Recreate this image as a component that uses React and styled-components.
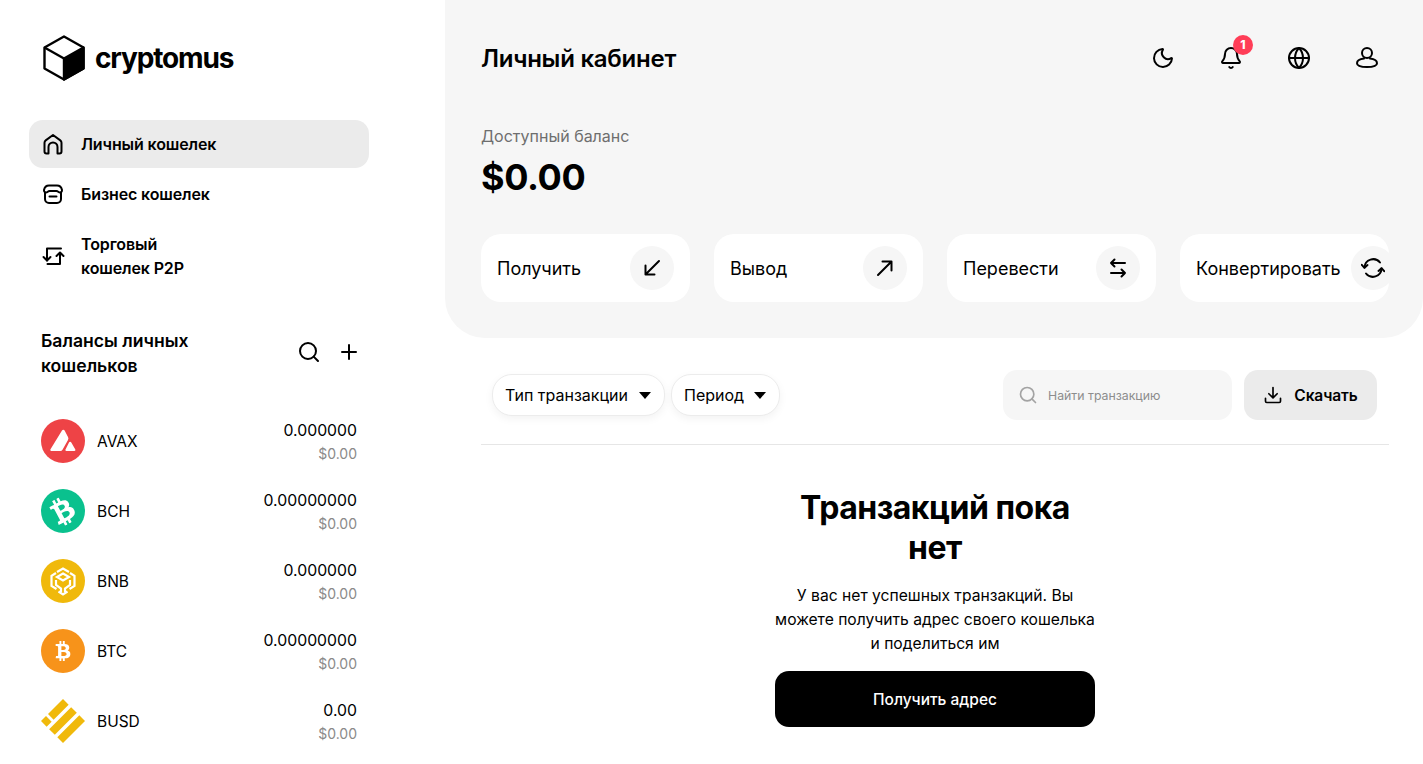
import styled, { createGlobalStyle } from "styled-components";
import { Bell, Globe, Moon, Plus, Search } from "lucide-react";
import { FaBtc } from "react-icons/fa";

const GlobalStyle = createGlobalStyle`
  html, body {
    margin: 0;
    padding: 0;
    height: 100%;
    overflow: hidden;
    background: #fff;
    color: #000;
    font-family: Inter, "Noto Sans", sans-serif;
  }
  * { box-sizing: border-box; }
`;

const Page = styled.div`
  display: grid;
  grid-template-columns: 445px 978px;
  height: 764px;
  overflow: hidden;
`;

/* sidebar */
const Sidebar = styled.aside`
  padding-left: 29px;
  width: 369px;
`;

const Logo = styled.div`
  display: flex;
  align-items: center;
  gap: 10px;
  height: 120px;
  padding: 0 0 4px 14px;
`;

const LogoText = styled.span`
  font-size: 28px;
  font-weight: 700;
  letter-spacing: -1.15px;
`;

const Nav = styled.nav`
  display: flex;
  flex-direction: column;
  gap: 2px;
`;

const NavItem = styled.a`
  display: flex;
  align-items: center;
  gap: 16px;
  padding: 12px;
  border-radius: 14px;
  background: ${({ $active }) => ($active ? "#ebebeb" : "transparent")};
  font-size: 16px;
  font-weight: 600;
  line-height: 24px;
  letter-spacing: -0.12px;
  svg { flex: none; }
`;

const BalanceHead = styled.div`
  display: flex;
  align-items: center;
  justify-content: space-between;
  margin-top: 36px;
  padding: 0 12px;
`;

const BalanceTitle = styled.h2`
  margin: 0;
  width: 190px;
  font-size: 17.6px;
  font-weight: 600;
  line-height: 25px;
`;

const BalanceTools = styled.div`
  display: flex;
  align-items: center;
  gap: 16px;
  margin: 0 -4px 2px 0;
`;

const CoinList = styled.div`
  margin-top: 28px;
  padding: 0 12px;
`;

const CoinRow = styled.div`
  display: flex;
  align-items: center;
  height: 70px;
  gap: 12px;
`;

const CoinBadge = styled.div`
  display: flex;
  align-items: center;
  justify-content: center;
  width: 44px;
  height: 44px;
  border-radius: 50%;
  flex: none;
  color: #fff;
  background: ${({ $bg }) => $bg};
`;

const CoinName = styled.span`
  flex: 1;
  font-size: 15.5px;
`;

const CoinAmounts = styled.div`
  padding-top: 3px;
  text-align: right;
  line-height: 24px;
`;

const CoinAmount = styled.div`
  font-size: 15.8px;
  margin-bottom: -1px;
`;

const CoinUsd = styled.div`
  font-size: 14px;
  color: #8a8a8a;
`;

/* main column */
const Main = styled.main`
  display: flex;
  flex-direction: column;
  min-width: 0;
`;

const Panel = styled.section`
  background: #f6f6f6;
  padding: 0 34px 36px 36px;
  border-radius: 0 0 40px 40px;
`;

const TopBar = styled.div`
  display: flex;
  align-items: center;
  justify-content: space-between;
  height: 116px;
`;

const Title = styled.h1`
  margin: 0;
  font-size: 24px;
  font-weight: 600;
  letter-spacing: -0.25px;
`;

const TopIcons = styled.div`
  display: flex;
  gap: 24px;
`;

const TopIcon = styled.div`
  position: relative;
  display: flex;
  align-items: center;
  justify-content: center;
  width: 44px;
  height: 44px;
`;

const Badge = styled.span`
  position: absolute;
  top: -1px;
  right: 0;
  width: 20px;
  height: 20px;
  border-radius: 50%;
  background: #ff3d57;
  color: #fff;
  font-size: 12px;
  font-weight: 800;
  line-height: 20px;
  text-align: center;
`;

const BalanceLabel = styled.div`
  margin-top: 8px;
  font-size: 16px;
  line-height: 24px;
  color: #6e6e6e;
`;

const BalanceValue = styled.div`
  margin-top: 6px;
  font-size: 36px;
  font-weight: 700;
  line-height: 46px;
  letter-spacing: -0.4px;
`;

const Actions = styled.div`
  display: flex;
  gap: 24px;
  margin-top: 34px;
  overflow: hidden;
`;

const ActionCard = styled.div`
  display: flex;
  align-items: center;
  justify-content: space-between;
  gap: 10px;
  flex: none;
  width: 209px;
  height: 68px;
  padding: 0 16px;
  border-radius: 20px;
  background: #fff;
  font-size: 18px;
  white-space: nowrap;
`;

const ActionIcon = styled.div`
  display: flex;
  align-items: center;
  justify-content: center;
  flex: none;
  width: 44px;
  height: 44px;
  border-radius: 50%;
  background: #f6f6f6;
`;

const Content = styled.div`
  padding: 32px 34px 0 36px;
`;

const Filters = styled.div`
  display: flex;
  align-items: center;
  justify-content: space-between;
  padding: 0 12px 24px 11px;
  border-bottom: 1px solid #e6e6e6;
`;

const FilterGroup = styled.div`
  display: flex;
  align-items: center;
  gap: ${({ $gap }) => $gap}px;
`;

const Pill = styled.div`
  display: flex;
  align-items: center;
  justify-content: space-between;
  width: ${({ $w }) => $w}px;
  height: 42px;
  padding: 0 13px 0 12px;
  border: 1px solid #ececec;
  border-radius: 20px;
  background: #fff;
  box-shadow: 0 3px 8px rgba(0, 0, 0, 0.05);
  font-size: 16px;
`;

const Caret = styled.span`
  width: 0;
  height: 0;
  border-left: 6.5px solid transparent;
  border-right: 6.5px solid transparent;
  border-top: 7px solid #000;
`;

const SearchBox = styled.div`
  display: flex;
  align-items: center;
  gap: 10px;
  width: 229px;
  height: 50px;
  padding-left: 15px;
  border-radius: 14px;
  background: #f6f6f6;
  color: #8d8d8d;
  font-size: 12.3px;
`;

const DownloadButton = styled.div`
  display: flex;
  align-items: center;
  justify-content: center;
  gap: 11px;
  width: 133px;
  height: 50px;
  border-radius: 14px;
  background: #ebebeb;
  font-size: 15.5px;
  font-weight: 600;
  letter-spacing: -0.1px;
`;

const Empty = styled.div`
  display: flex;
  flex-direction: column;
  align-items: center;
  width: 320px;
  margin: 43px auto 0;
  text-align: center;
`;

const EmptyTitle = styled.h2`
  margin: 0;
  font-size: 32px;
  font-weight: 700;
  line-height: 40px;
  letter-spacing: -0.5px;
`;

const EmptyText = styled.p`
  width: 330px;
  margin: 16px -5px 15px;
  font-size: 15.65px;
  line-height: 24px;
`;

const PrimaryButton = styled.div`
  display: flex;
  align-items: center;
  justify-content: center;
  width: 320px;
  height: 56px;
  border-radius: 14px;
  background: #000;
  color: #fff;
  font-size: 15.5px;
  font-weight: 500;
`;

const stroke = { fill: "none", stroke: "#000", strokeWidth: 2, strokeLinecap: "round", strokeLinejoin: "round" };

const CubeLogo = () => (
  <svg width="42" height="46" viewBox="0 0 42 46">
    <path d="M21 1.5 40.500 12.500V33.500L21 44.500 1.500 33.500V12.500Z" fill="#fff" stroke="#000" strokeWidth="2.4" strokeLinejoin="round" />
    <path d="M21 23.500 40.500 12.500V33.500L21 44.500Z" fill="#000" stroke="#000" strokeWidth="2.4" strokeLinejoin="round" />
    <path d="M1.500 12.500 21 23.500" stroke="#000" strokeWidth="2.4" />
  </svg>
);

const HomeIcon = () => (
  <svg width="24" height="24" viewBox="0 0 24 24" {...stroke}>
    <path d="M3.500 19.500V10.800a3 3 0 0 1 1.200-2.400L12 3l7.300 5.400a3 3 0 0 1 1.200 2.400v8.700a2 2 0 0 1-2 2H16.500V15a4.500 4.500 0 0 0-9 0v6.500H5.500a2 2 0 0 1-2-2z" />
  </svg>
);

const StoreIcon = () => (
  <svg width="24" height="24" viewBox="0 0 24 24" {...stroke}>
    <path d="M8 3.500h8c2.500 0 4.500 2 5 4.500.2 1.500-1 2.500-2 2.500-1.500 0-2-1.500-3.500-1.500h-7C7 9 6.500 10.500 5 10.500c-1 0-2.200-1-2-2.500.5-2.500 2.500-4.500 5-4.500z" />
    <path d="M4 10.500V17a4 4 0 0 0 4 4h8a4 4 0 0 0 4-4v-6.500" />
    <path d="M8.500 14.500h7" />
  </svg>
);

const TradeIcon = () => (
  <svg width="24" height="24" viewBox="0 0 24 24" {...stroke}>
    <path d="M6 16.500V4.500h14" />
    <path d="M2.500 13 6 16.500 9.500 13" />
    <path d="M19 9v11H6.500" />
    <path d="M15.500 12 19 8.500l3.500 3.500" />
  </svg>
);

const UserIcon = () => (
  <svg width="24" height="24" viewBox="0 0 24 24" {...stroke}>
    <circle cx="12" cy="7" r="5" />
    <path d="M9 12.500C5 13 2 14.800 2 17.200 2 19.700 5 21 12 21s10-1.300 10-3.800c0-2.400-3-4.200-7-4.700" />
  </svg>
);

const ReceiveIcon = () => (
  <svg width="24" height="24" viewBox="0 0 24 24" {...stroke}>
    <path d="M19 5 5.500 18.500M5.500 9.500v9h9" />
  </svg>
);

const SendIcon = () => (
  <svg width="24" height="24" viewBox="0 0 24 24" {...stroke}>
    <path d="M5 19 18.500 5.500M9.500 5.500h9v9" />
  </svg>
);

const SwapIcon = () => (
  <svg width="24" height="24" viewBox="0 0 24 24" {...stroke}>
    <path d="M19 7H5M8.500 3.500 5 7l3.500 3.500" />
    <path d="M5 17h14M15.500 13.500 19 17l-3.500 3.500" />
  </svg>
);

const ConvertIcon = () => (
  <svg width="24" height="24" viewBox="0 0 24 24" {...stroke}>
    <path d="M3.500 11.500A8.700 8.700 0 0 1 19 6.500" />
    <path d="M.8 8.800l2.700 3 3-2.700" />
    <path d="M20.500 12.500A8.700 8.700 0 0 1 5 17.500" />
    <path d="M23.200 15.200l-2.700-3-3 2.700" />
  </svg>
);

const DownloadIcon = () => (
  <svg width="20" height="20" viewBox="0 0 24 24" {...stroke}>
    <path d="M12 3v12M7 10.500l5 5 5-5" />
    <path d="M3 16v3.500A1.500 1.500 0 0 0 4.500 21h15a1.500 1.500 0 0 0 1.500-1.500V16" />
  </svg>
);

const AvaxMark = () => (
  <svg width="28" height="24" viewBox="0 0 28 24" fill="#fff">
    <path d="M13 1.500a1.500 1.500 0 0 1 2.600 0L19 8a3 3 0 0 1 0 3l-5.500 9.800a2.500 2.500 0 0 1-2.200 1.200H2.500a1.200 1.200 0 0 1-1-1.800z" />
    <path d="M20 13.500a1.300 1.300 0 0 1 2.300 0l4 7a1 1 0 0 1-.9 1.500h-8a1 1 0 0 1-.9-1.500z" />
  </svg>
);

const BnbMark = () => (
  <svg width="30" height="30" viewBox="0 0 30 30" fill="none" stroke="#fff" strokeWidth="2.2">
    <path d="M9 6 15 2.500 21 6" />
    <path d="M15 7.500 21 11l-6 3.500L9 11z" />
    <path d="M8 7 3.500 9.800V20l5 3" />
    <path d="M22 7l4.500 2.800V20l-5 3" />
    <path d="M8 14v5l5 3.500v3.500" />
    <path d="M22 14v5l-5 3.500v3.500" />
    <path d="M10.500 25.500 15 28.500l4.500-3" />
  </svg>
);

const BusdMark = () => (
  <svg width="44" height="44" viewBox="0 0 44 44" fill="#f0b90b">
    <path d="M22 0 27.650 5.650 12.650 20.650 7 15z" />
    <path d="M5 17 10.650 22.650 5.650 27.650 0 22z" />
    <path d="M30.150 8.150 35.800 13.800 13.800 35.800 8.150 30.150z" />
    <path d="M38.300 16.300 44 22 22 44 16.300 38.300z" />
  </svg>
);

const coins = [
  { name: "AVAX", amount: "0.000000", bg: "#ee4346", mark: <AvaxMark /> },
  { name: "BCH", amount: "0.00000000", bg: "#0ac18e", mark: <FaBtc size={28} style={{ transform: "rotate(-28deg)" }} /> },
  { name: "BNB", amount: "0.000000", bg: "#f0b90b", mark: <BnbMark /> },
  { name: "BTC", amount: "0.00000000", bg: "#f7931a", mark: <FaBtc size={20} /> },
  { name: "BUSD", amount: "0.00", bg: "transparent", mark: <BusdMark /> },
];

const actions = [
  { label: "Получить", icon: <ReceiveIcon /> },
  { label: "Вывод", icon: <SendIcon /> },
  { label: "Перевести", icon: <SwapIcon /> },
  { label: "Конвертировать", icon: <ConvertIcon /> },
];

export default function App() {
  return (
    <Page>
      <GlobalStyle />
      <Sidebar>
        <Logo>
          <CubeLogo />
          <LogoText>cryptomus</LogoText>
        </Logo>
        <Nav>
          <NavItem $active>
            <HomeIcon />
            Личный кошелек
          </NavItem>
          <NavItem>
            <StoreIcon />
            Бизнес кошелек
          </NavItem>
          <NavItem>
            <TradeIcon />
            <span>
              Торговый
              <br />
              кошелек P2P
            </span>
          </NavItem>
        </Nav>
        <BalanceHead>
          <BalanceTitle>Балансы личных кошельков</BalanceTitle>
          <BalanceTools>
            <Search size={24} strokeWidth={2} />
            <Plus size={24} strokeWidth={2} />
          </BalanceTools>
        </BalanceHead>
        <CoinList>
          {coins.map((coin) => (
            <CoinRow key={coin.name}>
              <CoinBadge $bg={coin.bg}>{coin.mark}</CoinBadge>
              <CoinName>{coin.name}</CoinName>
              <CoinAmounts>
                <CoinAmount>{coin.amount}</CoinAmount>
                <CoinUsd>$0.00</CoinUsd>
              </CoinAmounts>
            </CoinRow>
          ))}
        </CoinList>
      </Sidebar>
      <Main>
        <Panel>
          <TopBar>
            <Title>Личный кабинет</Title>
            <TopIcons>
              <TopIcon>
                <Moon size={24} strokeWidth={2} />
              </TopIcon>
              <TopIcon>
                <Bell size={24} strokeWidth={2} />
                <Badge>1</Badge>
              </TopIcon>
              <TopIcon>
                <Globe size={24} strokeWidth={2} />
              </TopIcon>
              <TopIcon>
                <UserIcon />
              </TopIcon>
            </TopIcons>
          </TopBar>
          <BalanceLabel>Доступный баланс</BalanceLabel>
          <BalanceValue>$0.00</BalanceValue>
          <Actions>
            {actions.map((action) => (
              <ActionCard key={action.label}>
                {action.label}
                <ActionIcon>{action.icon}</ActionIcon>
              </ActionCard>
            ))}
          </Actions>
        </Panel>
        <Content>
          <Filters>
            <FilterGroup $gap={6}>
              <Pill $w={173}>
                Тип транзакции
                <Caret />
              </Pill>
              <Pill $w={109}>
                Период
                <Caret />
              </Pill>
            </FilterGroup>
            <FilterGroup $gap={12}>
              <SearchBox>
                <Search size={20} strokeWidth={2} color="#a3a3a3" />
                Найти транзакцию
              </SearchBox>
              <DownloadButton>
                <DownloadIcon />
                Скачать
              </DownloadButton>
            </FilterGroup>
          </Filters>
          <Empty>
            <EmptyTitle>
              Транзакций пока
              <br />
              нет
            </EmptyTitle>
            <EmptyText>
              У вас нет успешных транзакций. Вы можете получить адрес своего
              кошелька и поделиться им
            </EmptyText>
            <PrimaryButton>Получить адрес</PrimaryButton>
          </Empty>
        </Content>
      </Main>
    </Page>
  );
}
